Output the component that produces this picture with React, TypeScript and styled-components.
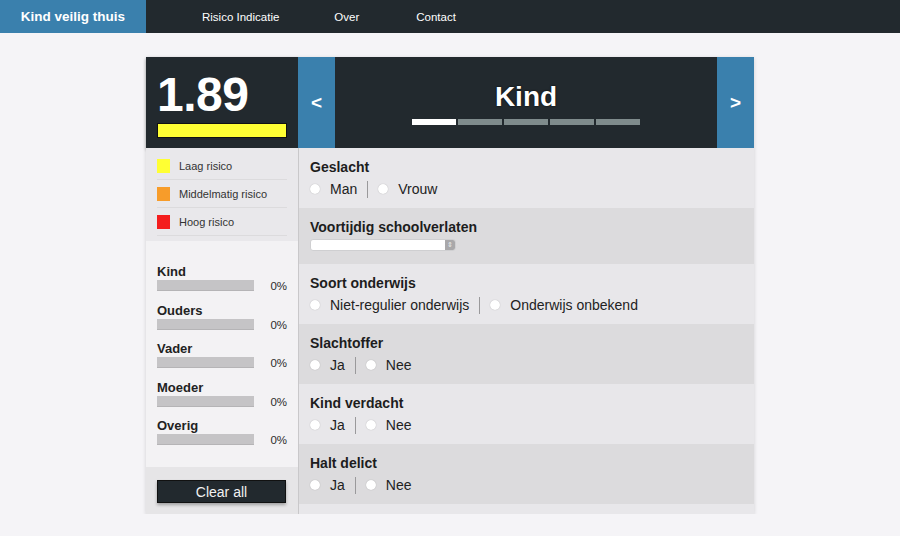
import React from 'react';
import styled, { createGlobalStyle } from 'styled-components';

const GlobalStyle = createGlobalStyle`
  * { box-sizing: border-box; }
  body {
    margin: 0;
    background: #f5f4f7;
    font-family: "Liberation Sans", Arial, sans-serif;
    color: #222;
  }
`;

const NavBar = styled.nav`
  display: flex;
  height: 33px;
  background: #22292e;
`;

const Brand = styled.div`
  width: 146px;
  display: flex;
  align-items: center;
  justify-content: center;
  background: #3a80ad;
  color: #fff;
  font-weight: bold;
  font-size: 13.5px;
`;

const NavLink = styled.a<{ $left: number }>`
  margin-left: ${({ $left }) => $left}px;
  display: flex;
  align-items: center;
  color: #fff;
  font-size: 11.5px;
  text-decoration: none;
`;

const Main = styled.main`
  width: 608px;
  margin: 24px auto 0;
  box-shadow: 0 1px 4px rgba(0, 0, 0, 0.15);
`;

const Header = styled.div`
  display: flex;
  height: 91px;
  background: #22292e;
`;

const ScoreBox = styled.div`
  width: 152px;
  padding: 14px 11px 0;
  box-shadow: 0 2px 3px rgba(0, 0, 0, 0.3);
`;

const Score = styled.div`
  color: #fff;
  font-size: 48px;
  font-weight: bold;
  line-height: 48px;
  letter-spacing: -0.5px;
`;

const ScoreBar = styled.div<{ $color: string }>`
  margin-top: 4px;
  height: 15px;
  background: ${({ $color }) => $color};
  border: 1px solid #111;
`;

const Arrow = styled.div`
  width: 37px;
  display: flex;
  align-items: center;
  justify-content: center;
  background: #3a80ad;
  color: #fff;
  font-size: 19px;
  font-weight: bold;
`;

const TitleBox = styled.div`
  flex: 1;
  display: flex;
  flex-direction: column;
  align-items: center;
  padding-top: 24px;
`;

const Title = styled.div`
  color: #fff;
  font-size: 28px;
  font-weight: bold;
  line-height: 32px;
  text-shadow: 0 0 2px #000;
`;

const Steps = styled.div`
  display: flex;
  gap: 2px;
  margin-top: 6px;
`;

const Step = styled.div<{ $active?: boolean }>`
  width: 44px;
  height: 6px;
  background: ${({ $active }) => ($active ? '#fff' : '#7f8b8c')};
`;

const Body = styled.div`
  display: flex;
`;

const Sidebar = styled.aside`
  width: 152px;
  display: flex;
  flex-direction: column;
  background: #f3f2f4;
`;

const Legend = styled.div`
  background: #e9e8eb;
  padding: 4px 11px 5px;
`;

const LegendRow = styled.div`
  display: flex;
  align-items: center;
  height: 28px;
  border-bottom: 1px solid #dcdbdd;
  font-size: 11px;
  color: #333;
`;

const Swatch = styled.span<{ $color: string }>`
  width: 13px;
  height: 14px;
  margin-right: 9px;
  background: ${({ $color }) => $color};
`;

const Bars = styled.div`
  padding: 22px 11px 22px;
  display: flex;
  flex-direction: column;
  gap: 10.5px;
`;

const BarGroup = styled.div`
  display: flex;
  flex-direction: column;
`;

const BarLabel = styled.div`
  font-size: 13px;
  font-weight: bold;
  color: #222;
  line-height: 17px;
`;

const BarRow = styled.div`
  display: flex;
  align-items: flex-end;
  justify-content: space-between;
`;

const BarTrack = styled.div`
  width: 97px;
  height: 11px;
  background: #c5c4c6;
  border-bottom: 1px solid #b5b4b6;
`;

const BarValue = styled.span`
  font-size: 11.5px;
  line-height: 12px;
  color: #2b2b2b;
  margin-bottom: -1px;
`;

const ClearArea = styled.div`
  flex: 1;
  background: #e6e5e7;
  padding: 13px 11px 0;
  height: 49px;
`;

const ClearButton = styled.button`
  width: 129px;
  height: 23px;
  border: 1px solid #111;
  background: #22292e;
  color: #f2f2f2;
  font-family: inherit;
  font-size: 14px;
  box-shadow: 0 2px 3px rgba(0, 0, 0, 0.3);
`;

const Questions = styled.section`
  flex: 1;
  border-left: 1px solid #c9c8ca;
  background: #e8e7ea;
  padding-bottom: 10px;
`;

const Question = styled.div<{ $dark?: boolean; $height: number }>`
  height: ${({ $height }) => $height}px;
  padding: 11px 11px 0;
  background: ${({ $dark }) => ($dark ? '#dcdbdd' : '#e8e7ea')};
`;

const QuestionTitle = styled.div`
  font-size: 14px;
  font-weight: bold;
  line-height: 16px;
  color: #1d1d1d;
`;

const Options = styled.div`
  display: flex;
  align-items: center;
  margin-top: 5px;
  height: 18px;
`;

const Option = styled.label`
  display: flex;
  align-items: center;
  font-size: 14px;
  color: #222;
`;

const Radio = styled.span`
  width: 10px;
  height: 10px;
  border-radius: 50%;
  background: #fff;
  box-shadow: 0 0 1px rgba(0, 0, 0, 0.3);
  margin: 0 10px 0 0;
`;

const Divider = styled.span`
  width: 1px;
  height: 17px;
  background: #9a999b;
  margin: 0 10px;
`;

const Select = styled.div`
  margin-top: 4px;
  width: 146px;
  height: 12px;
  background: #fff;
  border: 1px solid #cfcfd1;
  border-radius: 3px;
  display: flex;
  justify-content: flex-end;
`;

const SelectStepper = styled.span`
  width: 10px;
  background: #a9a8aa;
  border-radius: 0 2px 2px 0;
  color: #eee;
  font-size: 7px;
  line-height: 10px;
  text-align: center;
`;

const legend = [
  { color: '#ffff33', label: 'Laag risico' },
  { color: '#f79c2a', label: 'Middelmatig risico' },
  { color: '#f41d1d', label: 'Hoog risico' },
];

const categories = ['Kind', 'Ouders', 'Vader', 'Moeder', 'Overig'];

type Q = { title: string; options?: string[]; select?: boolean; height: number };

const questions: Q[] = [
  { title: 'Geslacht', options: ['Man', 'Vrouw'], height: 60 },
  { title: 'Voortijdig schoolverlaten', select: true, height: 56 },
  { title: 'Soort onderwijs', options: ['Niet-regulier onderwijs', 'Onderwijs onbekend'], height: 60 },
  { title: 'Slachtoffer', options: ['Ja', 'Nee'], height: 60 },
  { title: 'Kind verdacht', options: ['Ja', 'Nee'], height: 60 },
  { title: 'Halt delict', options: ['Ja', 'Nee'], height: 60 },
];

const App: React.FC = () => {
  return (
    <>
      <GlobalStyle />
      <NavBar>
        <Brand>Kind veilig thuis</Brand>
        <NavLink $left={56}>Risico Indicatie</NavLink>
        <NavLink $left={55}>Over</NavLink>
        <NavLink $left={57}>Contact</NavLink>
      </NavBar>
      <Main>
        <Header>
          <ScoreBox>
            <Score>1.89</Score>
            <ScoreBar $color="#ffff33" />
          </ScoreBox>
          <Arrow>&lt;</Arrow>
          <TitleBox>
            <Title>Kind</Title>
            <Steps>
              {[0, 1, 2, 3, 4].map((i) => (
                <Step key={i} $active={i === 0} />
              ))}
            </Steps>
          </TitleBox>
          <Arrow>&gt;</Arrow>
        </Header>
        <Body>
          <Sidebar>
            <Legend>
              {legend.map((l) => (
                <LegendRow key={l.label}>
                  <Swatch $color={l.color} />
                  {l.label}
                </LegendRow>
              ))}
            </Legend>
            <Bars>
              {categories.map((c) => (
                <BarGroup key={c}>
                  <BarLabel>{c}</BarLabel>
                  <BarRow>
                    <BarTrack />
                    <BarValue>0%</BarValue>
                  </BarRow>
                </BarGroup>
              ))}
            </Bars>
            <ClearArea>
              <ClearButton>Clear all</ClearButton>
            </ClearArea>
          </Sidebar>
          <Questions>
            {questions.map((q, i) => (
              <Question key={q.title} $dark={i % 2 === 1} $height={q.height}>
                <QuestionTitle>{q.title}</QuestionTitle>
                {q.select ? (
                  <Select>
                    <SelectStepper>⇕</SelectStepper>
                  </Select>
                ) : (
                  <Options>
                    {q.options!.map((o, j) => (
                      <React.Fragment key={o}>
                        {j > 0 && <Divider />}
                        <Option>
                          <Radio />
                          {o}
                        </Option>
                      </React.Fragment>
                    ))}
                  </Options>
                )}
              </Question>
            ))}
          </Questions>
        </Body>
      </Main>
    </>
  );
};

export default App;
